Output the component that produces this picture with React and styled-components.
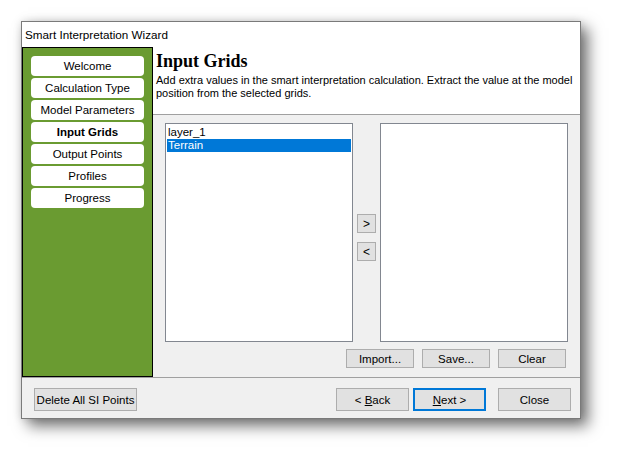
import React from "react";
import styled, { createGlobalStyle } from "styled-components";

const Global = createGlobalStyle`
  html, body { margin: 0; padding: 0; background: #ffffff; }
  body { font-family: "Liberation Sans", Tahoma, sans-serif; font-size: 11.5px; color: #000; }
`;

const Page = styled.div`
  padding: 21px 0 43px 21px;
  min-height: 462px;
  box-sizing: border-box;
`;

const Window = styled.div`
  width: 558px;
  height: 396px;
  border: 1px solid #7a7a7a;
  background: #f0f0f0;
  display: flex;
  flex-direction: column;
  box-shadow: 7px 7px 14px rgba(0, 0, 0, 0.55), 0 0 8px rgba(0, 0, 0, 0.12);
`;

const TitleBar = styled.div`
  height: 25px;
  background: #ffffff;
  display: flex;
  align-items: center;
  padding-left: 3px;
  font-size: 11.7px;
  color: #000;
`;

const Main = styled.div`
  display: flex;
  height: 330px;
`;

const Sidebar = styled.div`
  flex: 0 0 131px;
  background: #6a9b31;
  border: 1px solid #000;
  display: flex;
  flex-direction: column;
  gap: 2px;
  padding: 8px 0 0 8px;
  box-sizing: border-box;
`;

const NavItem = styled.div`
  width: 113px;
  height: 20px;
  background: #fff;
  border-radius: 4px;
  display: flex;
  align-items: center;
  justify-content: center;
  font-size: 11.5px;
  white-space: nowrap;
  font-weight: ${(p) => (p.$active ? "bold" : "normal")};
`;

const Content = styled.div`
  flex: 1;
  min-width: 0;
  display: flex;
  flex-direction: column;
`;

const Header = styled.div`
  height: 68px;
  background: #fff;
  border-bottom: 1px solid #a0a0a0;
  padding: 5px 0 0 3px;
  box-sizing: border-box;
`;

const HeaderTitle = styled.div`
  font-family: "Liberation Serif", "Times New Roman", serif;
  font-weight: bold;
  font-size: 18px;
  line-height: 19px;
`;

const HeaderText = styled.div`
  font-size: 11px;
  line-height: 13px;
  margin-top: 3px;
`;

const Body = styled.div`
  flex: 1;
  padding: 8px 12px 0 12px;
  display: flex;
  flex-direction: column;
`;

const ListsRow = styled.div`
  display: flex;
  height: 217px;
`;

const ListBox = styled.div`
  width: 186px;
  height: 215px;
  border: 1px solid #828790;
  background: #fff;
  padding: 1px;
  box-sizing: content-box;
  display: flex;
  flex-direction: column;
`;

const ListItem = styled.div`
  height: 13px;
  line-height: 13px;
  padding-left: 1px;
  font-size: 11.5px;
  background: ${(p) => (p.$selected ? "#0078d7" : "transparent")};
  color: ${(p) => (p.$selected ? "#fff" : "#000")};
`;

const ListTop = styled.div`
  height: 1px;
`;

const ArrowCol = styled.div`
  width: 27px;
  display: flex;
  flex-direction: column;
  align-items: center;
  gap: 9px;
  padding-top: 91px;
`;

const SmallButton = styled.div`
  width: 17px;
  height: 17px;
  border: 1px solid #adadad;
  background: #e1e1e1;
  display: flex;
  align-items: center;
  justify-content: center;
  font-size: 12px;
  color: #000;
`;

const ButtonRow = styled.div`
  display: flex;
  justify-content: flex-end;
  gap: 8px;
  margin-top: 9px;
  padding-right: 2px;
`;

const Button = styled.div`
  box-sizing: border-box;
  width: ${(p) => p.$w || 73}px;
  height: ${(p) => p.$h || 23}px;
  border: ${(p) => (p.$default ? "2px solid #0078d7" : "1px solid #adadad")};
  background: #e1e1e1;
  display: flex;
  align-items: center;
  justify-content: center;
  font-size: 11.5px;
  white-space: nowrap;
  color: #000;
`;

const Footer = styled.div`
  flex: 1;
  border-top: 1px solid #a0a0a0;
  display: flex;
  align-items: center;
  padding: 3px 9px 0 12px;
`;

const Spacer = styled.div`
  flex: 1;
`;

const NavPair = styled.div`
  display: flex;
  gap: 4px;
  margin-right: 12px;
`;

const U = styled.span`
  text-decoration: underline;
`;

const steps = [
  "Welcome",
  "Calculation Type",
  "Model Parameters",
  "Input Grids",
  "Output Points",
  "Profiles",
  "Progress",
];

export default function App() {
  return (
    <>
      <Global />
      <Page>
        <Window>
          <TitleBar>Smart Interpretation Wizard</TitleBar>
          <Main>
            <Sidebar>
              {steps.map((s) => (
                <NavItem key={s} $active={s === "Input Grids"}>
                  {s}
                </NavItem>
              ))}
            </Sidebar>
            <Content>
              <Header>
                <HeaderTitle>Input Grids</HeaderTitle>
                <HeaderText>
                  Add extra values in the smart interpretation calculation. Extract the value at the model
                  position from the selected grids.
                </HeaderText>
              </Header>
              <Body>
                <ListsRow>
                  <ListBox>
                    <ListTop />
                    <ListItem>layer_1</ListItem>
                    <ListItem $selected>Terrain</ListItem>
                  </ListBox>
                  <ArrowCol>
                    <SmallButton>&gt;</SmallButton>
                    <SmallButton>&lt;</SmallButton>
                  </ArrowCol>
                  <ListBox />
                </ListsRow>
                <ButtonRow>
                  <Button $w={68} $h={19}>Import...</Button>
                  <Button $w={68} $h={19}>Save...</Button>
                  <Button $w={68} $h={19}>Clear</Button>
                </ButtonRow>
              </Body>
            </Content>
          </Main>
          <Footer>
            <Button $w={103}>Delete All SI Points</Button>
            <Spacer />
            <NavPair>
              <Button>
                &lt;&nbsp;<U>B</U>ack
              </Button>
              <Button $default>
                <U>N</U>ext &gt;
              </Button>
            </NavPair>
            <Button>Close</Button>
          </Footer>
        </Window>
      </Page>
    </>
  );
}
